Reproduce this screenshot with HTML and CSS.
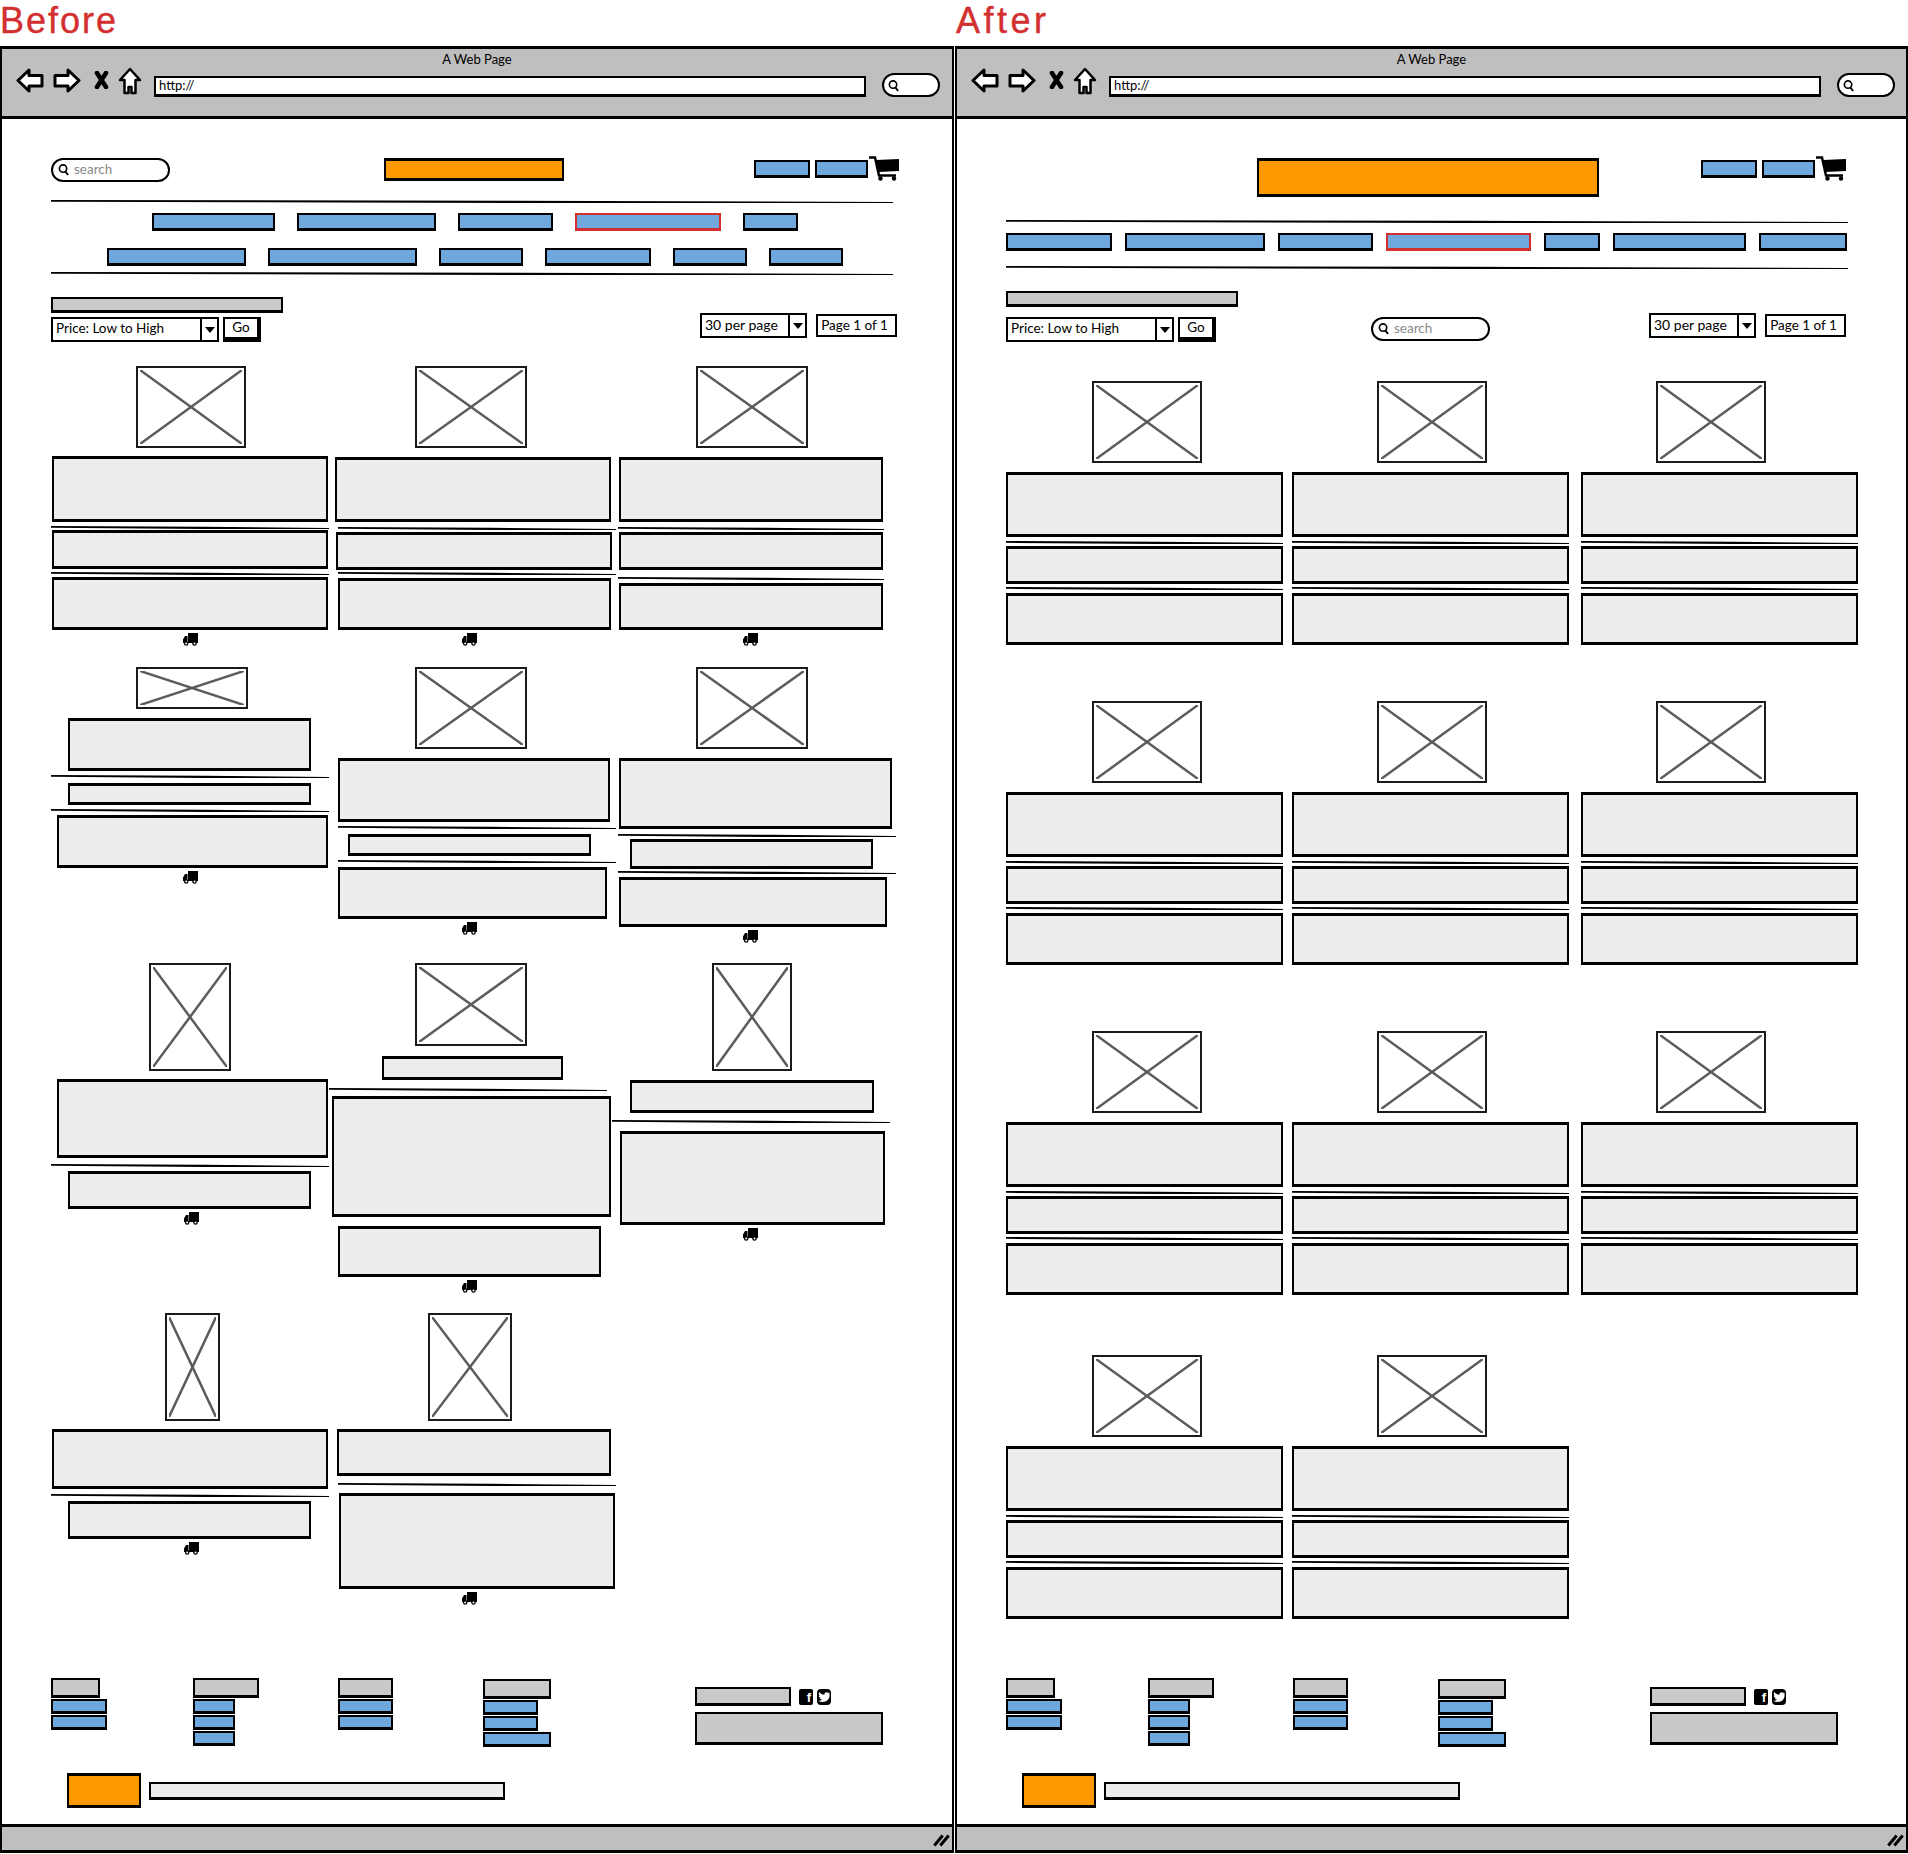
FILE: index.html
```html
<!DOCTYPE html>
<html lang="en">
<head>
    <meta charset="UTF-8">
    <meta name="viewport" content="width=device-width, initial-scale=1.0">
    <title>Before and After</title>
    <link rel="stylesheet" href="styles.css">
</head>
<body>
    <svg class="sprites" width="0" height="0" aria-hidden="true">
        <symbol id="i-back" viewBox="0 0 28 25"><path d="M2 12.5 L13 2 V7.500 H26 V18 H13 V23 Z" fill="#fff" stroke="#000" stroke-width="3" stroke-linejoin="round"/></symbol>
        <symbol id="i-forward" viewBox="0 0 28 25"><path d="M26 12.500 L15 2 V7.500 H2 V18 H15 V23 Z" fill="#fff" stroke="#000" stroke-width="3" stroke-linejoin="round"/></symbol>
        <symbol id="i-stop" viewBox="0 0 15 18"><path d="M3 2 L12 16 M12 2 L3 16" fill="none" stroke="#000" stroke-width="4.500" stroke-linecap="round"/></symbol>
        <symbol id="i-home" viewBox="0 0 24 28"><path d="M12 2 L22 13 H17.500 V26 H13.500 V20 H10.500 V26 H6.500 V13 H2 Z" fill="#fff" stroke="#000" stroke-width="2.500" stroke-linejoin="round"/></symbol>
        <symbol id="i-find" viewBox="0 0 12 14"><circle cx="5.500" cy="6" r="4" fill="none" stroke="#000" stroke-width="1.800"/><path d="M8 9 L11 13" stroke="#000" stroke-width="2"/></symbol>
        <symbol id="i-cart" viewBox="0 0 30 25"><path d="M0 1.500 H6 L10 19.500 H27" fill="none" stroke="#000" stroke-width="2.500"/><path d="M7 4 L30 3 V15 L9.500 16 Z" fill="#000"/><circle cx="11.500" cy="22.500" r="2.200" fill="#000"/><circle cx="25" cy="22.500" r="2.200" fill="#000"/></symbol>
        <symbol id="i-truck" viewBox="0 0 15 13"><path d="M5 0 H15 V10 H5 Z M4.500 3 V10 H0 V6.500 L2 3 Z" fill="#000"/><circle cx="3.200" cy="10.500" r="2.300" fill="#000"/><circle cx="3.200" cy="10.500" r="1" fill="#fff"/><circle cx="11.500" cy="10.500" r="2.300" fill="#000"/><circle cx="11.500" cy="10.500" r="1" fill="#fff"/></symbol>
        <symbol id="i-bird" viewBox="0 0 14 14"><path d="M13 3.200 C12.500 3.500 12 3.600 11.500 3.700 C12 3.300 12.400 2.800 12.600 2.200 C12.100 2.500 11.500 2.700 11 2.800 C9.800 1.500 7.400 2.400 7.400 4.200 C7.400 4.400 7.400 4.600 7.500 4.800 C5.300 4.700 3.400 3.700 2.100 2.100 C1.400 3.300 1.800 4.800 2.900 5.500 C2.500 5.500 2.100 5.400 1.700 5.200 C1.700 6.500 2.600 7.500 3.800 7.800 C3.400 7.900 3 7.900 2.600 7.800 C3 8.900 4 9.600 5.100 9.700 C4 10.500 2.600 10.900 1.200 10.700 C6.600 14 13.500 10.500 12.500 4.200 C12.900 3.900 12.700 3.600 13 3.200 Z" fill="#fff"/></symbol>
    </svg>

    <div class="labels">
        <h1 class="label label-before">Before</h1>
        <h1 class="label label-after">After</h1>
    </div>

    <div class="windows">
        <!-- old layout -->
        <section class="window window-before">
            <header class="chrome">
                <div class="chrome-title">A Web Page</div>
                <div class="chrome-bar">
                    <svg class="ico ico-back"><use href="#i-back"/></svg>
                    <svg class="ico ico-forward"><use href="#i-forward"/></svg>
                    <svg class="ico ico-stop"><use href="#i-stop"/></svg>
                    <svg class="ico ico-home"><use href="#i-home"/></svg>
                    <div class="url">http://</div>
                    <div class="chrome-search"><svg class="find"><use href="#i-find"/></svg></div>
                </div>
            </header>

            <main class="canvas">
                <div class="top">
                    <div class="search"><svg class="find"><use href="#i-find"/></svg>search</div>
                    <div class="logo"></div>
                    <div class="account">
                        <div class="bar bar-a"></div>
                        <div class="bar bar-b"></div>
                        <svg class="cart"><use href="#i-cart"/></svg>
                    </div>
                </div>
                <div class="rule rule-wide"></div>
                <nav class="nav" id="nav-before"></nav>
                <div class="rule rule-wide"></div>

                <div class="heading-bar"></div>
                <div class="toolbar">
                    <div class="select select-sort">
                        <span class="select-text">Price: Low to High</span>
                        <span class="select-arrow"></span>
                    </div>
                    <div class="go">Go</div>
                    <div class="pager">
                        <div class="select select-count">
                            <span class="select-text">30 per page</span>
                            <span class="select-arrow"></span>
                        </div>
                        <div class="page-no">Page 1 of 1</div>
                    </div>
                </div>

                <div class="grid" id="grid-before"></div>

                <footer class="foot">
                    <div class="foot-col"><div class="foot-head"></div><div class="bar foot-link"></div><div class="bar foot-link"></div></div>
                    <div class="foot-col"><div class="foot-head"></div><div class="bar foot-link"></div><div class="bar foot-link"></div><div class="bar foot-link"></div></div>
                    <div class="foot-col"><div class="foot-head"></div><div class="bar foot-link"></div><div class="bar foot-link"></div></div>
                    <div class="foot-col"><div class="foot-head"></div><div class="bar foot-link"></div><div class="bar foot-link"></div><div class="bar foot-link"></div></div>
                    <div class="social">
                        <div class="social-row">
                            <div class="social-title"></div>
                            <span class="badge">f</span>
                            <svg class="badge badge-tw"><use href="#i-bird"/></svg>
                        </div>
                        <div class="signup"></div>
                    </div>
                </footer>
                <div class="legal">
                    <div class="legal-logo"></div>
                    <div class="legal-text"></div>
                </div>
            </main>

            <div class="status"><span class="grip"></span></div>
        </section>

        <!-- new layout -->
        <section class="window window-after">
            <header class="chrome">
                <div class="chrome-title">A Web Page</div>
                <div class="chrome-bar">
                    <svg class="ico ico-back"><use href="#i-back"/></svg>
                    <svg class="ico ico-forward"><use href="#i-forward"/></svg>
                    <svg class="ico ico-stop"><use href="#i-stop"/></svg>
                    <svg class="ico ico-home"><use href="#i-home"/></svg>
                    <div class="url">http://</div>
                    <div class="chrome-search"><svg class="find"><use href="#i-find"/></svg></div>
                </div>
            </header>

            <main class="canvas">
                <div class="top">
                    <div class="logo"></div>
                    <div class="account">
                        <div class="bar bar-a"></div>
                        <div class="bar bar-b"></div>
                        <svg class="cart"><use href="#i-cart"/></svg>
                    </div>
                </div>
                <div class="rule rule-wide"></div>
                <nav class="nav" id="nav-after"></nav>
                <div class="rule rule-wide"></div>

                <div class="heading-bar"></div>
                <div class="toolbar">
                    <div class="select select-sort">
                        <span class="select-text">Price: Low to High</span>
                        <span class="select-arrow"></span>
                    </div>
                    <div class="go">Go</div>
                    <div class="search"><svg class="find"><use href="#i-find"/></svg>search</div>
                    <div class="pager">
                        <div class="select select-count">
                            <span class="select-text">30 per page</span>
                            <span class="select-arrow"></span>
                        </div>
                        <div class="page-no">Page 1 of 1</div>
                    </div>
                </div>

                <div class="grid" id="grid-after"></div>

                <footer class="foot">
                    <div class="foot-col"><div class="foot-head"></div><div class="bar foot-link"></div><div class="bar foot-link"></div></div>
                    <div class="foot-col"><div class="foot-head"></div><div class="bar foot-link"></div><div class="bar foot-link"></div><div class="bar foot-link"></div></div>
                    <div class="foot-col"><div class="foot-head"></div><div class="bar foot-link"></div><div class="bar foot-link"></div></div>
                    <div class="foot-col"><div class="foot-head"></div><div class="bar foot-link"></div><div class="bar foot-link"></div><div class="bar foot-link"></div></div>
                    <div class="social">
                        <div class="social-row">
                            <div class="social-title"></div>
                            <span class="badge">f</span>
                            <svg class="badge badge-tw"><use href="#i-bird"/></svg>
                        </div>
                        <div class="signup"></div>
                    </div>
                </footer>
                <div class="legal">
                    <div class="legal-logo"></div>
                    <div class="legal-text"></div>
                </div>
            </main>

            <div class="status"><span class="grip"></span></div>
        </section>
    </div>

    <script src="app.js"></script>
</body>
</html>
```

FILE: styles.css
```css
* {
    box-sizing: border-box;
}

body {
    margin: 0;
    background: #fff;
    color: #000;
    font-family: Lato, "Open Sans", sans-serif;
}

.sprites {
    position: absolute;
}

/* Before / After captions */
.labels {
    display: flex;
    height: 46px;
}

.label {
    margin: 0;
    font-family: "Liberation Sans", Arial, sans-serif;
    font-size: 36px;
    font-weight: 400;
    line-height: 41px;
    color: #d32f2f;
    -webkit-text-stroke: 0.400px #d32f2f;
}

.label-before {
    width: 956px;
    letter-spacing: 2px;
}

.label-after {
    letter-spacing: 3.500px;
}

.windows {
    display: flex;
    gap: 1px;
}

.window {
    display: flex;
    flex-direction: column;
    height: 1807px;
    border: 2px solid #000;
    border-top-width: 3px;
    border-bottom-width: 3px;
}

.window-before {
    width: 954px;
}

.window-after {
    width: 953px;
}

/* browser chrome */
.chrome {
    height: 70px;
    padding-top: 2px;
    background: #bfbfbf;
    border-bottom: 3px solid #000;
}

.chrome-title {
    height: 16px;
    font-size: 13px;
    line-height: 16px;
    text-align: center;
}

.chrome-bar {
    display: flex;
    align-items: flex-start;
    padding-left: 14px;
}

.ico-back {
    width: 28px;
    height: 25px;
    margin-top: 1px;
}

.ico-forward {
    width: 28px;
    height: 25px;
    margin: 1px 0 0 9px;
}

.ico-stop {
    width: 15px;
    height: 18px;
    margin: 4px 0 0 13px;
}

.ico-home {
    width: 24px;
    height: 28px;
    margin: 0 0 0 9px;
}

.url {
    width: 712px;
    height: 21px;
    margin: 9px 0 0 12px;
    padding-left: 3px;
    background: #fff;
    border: 2px solid #000;
    border-bottom-width: 3px;
    font-size: 13px;
    line-height: 14px;
}

.chrome-search {
    display: flex;
    align-items: center;
    width: 58px;
    height: 24px;
    margin: 6px 0 0 16px;
    padding-left: 4px;
    background: #fff;
    border: 2px solid #000;
    border-radius: 12px;
}

.find {
    flex: none;
    width: 11px;
    height: 13px;
}

/* page content */
.canvas {
    flex: 1;
    background: #fff;
}

.window-before .canvas {
    padding: 37px 53px 0 49px;
}

.window-after .canvas {
    padding: 37px 60px 0 49px;
}

.top {
    display: flex;
    align-items: flex-start;
}

.window-before .top {
    height: 25px;
    margin-bottom: 19px;
}

.window-after .top {
    height: 41px;
    margin-bottom: 23px;
}

.search {
    display: flex;
    align-items: center;
    gap: 5px;
    width: 119px;
    height: 24px;
    padding: 0 0 2px 5px;
    background: #fff;
    border: 2px solid #000;
    border-radius: 12px;
    font-size: 13.500px;
    color: #8a8a8a;
}

.window-before .top .search {
    margin-top: 2px;
}

.logo {
    margin-top: 2px;
    background: #f90;
    border: 2px solid #000;
    border-top-width: 3px;
    border-bottom-width: 3px;
}

.window-before .logo {
    width: 180px;
    height: 23px;
    margin-left: 214px;
}

.window-after .logo {
    width: 342px;
    height: 39px;
    margin-left: 251px;
}

.account {
    display: flex;
    align-items: flex-start;
    margin-left: auto;
}

.bar {
    flex: none;
    background: #6fa8dc;
    border: 2px solid #000;
    border-bottom-width: 3px;
}

.bar-a {
    width: 56px;
    height: 18px;
    margin-top: 4px;
}

.bar-b {
    width: 53px;
    height: 18px;
    margin: 4px 0 0 5px;
}

.cart {
    width: 30px;
    height: 25px;
    margin-left: 1px;
}

.rule {
    flex: none;
    height: 3px;
    background: #000;
    clip-path: polygon(0 0, 55% 25%, 100% 65%, 100% 100%, 55% 100%, 0 60%);
}

.rule-wide {
    width: 842px;
}

/* nav rows */
.window-before .nav {
    padding: 10px 0 6px;
}

.window-after .nav {
    padding: 10px 0 15px;
}

.nav-row {
    display: flex;
    height: 18px;
}

.window-before .nav-row {
    justify-content: center;
    gap: 22px;
    margin-bottom: 17px;
}

.window-before .nav-row:last-child {
    margin-bottom: 0;
}

.window-after .nav-row {
    justify-content: space-between;
    width: 841px;
}

.bar-active {
    border-color: #d32f2f;
}

/* sort and paging */
.heading-bar {
    width: 232px;
    height: 16px;
    background: #c9c9c9;
    border: 2px solid #000;
    border-bottom-width: 3px;
}

.window-before .heading-bar {
    margin-top: 22px;
}

.window-after .heading-bar {
    margin-top: 22px;
}

.toolbar {
    display: flex;
    align-items: flex-start;
    font-size: 13.500px;
}

.window-before .toolbar {
    margin-top: 4px;
}

.window-after .toolbar {
    margin-top: 10px;
}

.select {
    display: flex;
    height: 25px;
    background: #fff;
    border: 2px solid #000;
}

.select-sort {
    width: 168px;
}

.select-count {
    width: 107px;
    font-size: 14px;
}

.select-text {
    flex: 1;
    padding-left: 3px;
    line-height: 19px;
}

.select-arrow {
    position: relative;
    flex: none;
    width: 17px;
    border-left: 2px solid #000;
}

.select-arrow::after {
    content: "";
    position: absolute;
    top: 8px;
    left: 3px;
    border: 5px solid transparent;
    border-top: 6px solid #000;
    border-bottom: 0;
}

.go {
    width: 38px;
    height: 25px;
    margin-left: 4px;
    background: #fff;
    border: 2px solid #000;
    border-right-width: 4px;
    border-bottom-width: 5px;
    text-align: center;
    line-height: 17px;
}

.toolbar > .search {
    margin-left: 155px;
}

.pager {
    display: flex;
    align-items: center;
    gap: 9px;
    margin: -4px 0 0 auto;
}

.window-before .pager {
    margin-right: 2px;
}

.page-no {
    width: 81px;
    height: 23px;
    padding-right: 4px;
    background: #fff;
    border: 2px solid #000;
    text-align: center;
    line-height: 19px;
}

/* product grid */
.grid {
    display: grid;
}

.window-before .grid {
    grid-template-columns: 284px 284px 277px;
    grid-template-rows: 301px 296px 350px 365px;
    margin-top: 24px;
}

.window-after .grid {
    grid-template-columns: 286px 289px 276px;
    grid-template-rows: 320px 330px 324px 323px;
    margin-top: 39px;
}

.card {
    display: flex;
    flex-direction: column;
    align-items: flex-start;
}

.card > * {
    flex: none;
}

.ph {
    display: block;
    background: #fff;
    border: 2px solid #1a1a1a;
    padding: 2px;
}

.ph svg {
    display: block;
    width: 100%;
    height: 100%;
}

.ph line {
    stroke: #5c5c5c;
    stroke-width: 2.500;
    vector-effect: non-scaling-stroke;
}

.block {
    background: #ededed;
    border: 2px solid #000;
    border-top-width: 3px;
    border-bottom-width: 3px;
}

.truck {
    width: 15px;
    height: 13px;
}

/* footer */
.foot {
    display: grid;
    grid-template-columns: 142px 145px 145px 212px auto;
    height: 68px;
}

.foot-col {
    display: flex;
    flex-direction: column;
    gap: 1px;
}

.foot-head {
    height: 20px;
    background: #c9c9c9;
    border: 2px solid #000;
    border-bottom-width: 3px;
}

.foot-link {
    height: 15px;
}

.foot-col:nth-child(1) .foot-head {
    width: 49px;
}

.foot-col:nth-child(1) .foot-link {
    width: 56px;
}

.foot-col:nth-child(2) .foot-head {
    width: 66px;
}

.foot-col:nth-child(2) .foot-link {
    width: 42px;
}

.foot-col:nth-child(3) .foot-head,
.foot-col:nth-child(3) .foot-link {
    width: 55px;
}

.foot-col:nth-child(4) {
    padding-top: 1px;
}

.foot-col:nth-child(4) .foot-link {
    width: 55px;
}

.foot-col:nth-child(4) .foot-head,
.foot-col:nth-child(4) .foot-link:last-child {
    width: 68px;
}

.social {
    padding-top: 9px;
}

.social-row {
    display: flex;
    align-items: center;
    height: 19px;
    margin-bottom: 6px;
}

.social-title {
    width: 96px;
    height: 19px;
    margin-right: 8px;
    background: #c9c9c9;
    border: 2px solid #000;
    border-bottom-width: 3px;
}

.badge {
    display: block;
    width: 14px;
    height: 16px;
    margin-right: 4px;
    background: #000;
    border-radius: 2px;
    color: #fff;
    font-family: "Liberation Sans", sans-serif;
    font-size: 13px;
    font-weight: 700;
    line-height: 17px;
    text-align: right;
    padding-right: 2px;
}

.badge-tw {
    padding: 0;
    border-radius: 4px;
}

.signup {
    width: 188px;
    height: 33px;
    background: #c9c9c9;
    border: 2px solid #000;
    border-bottom-width: 3px;
}

.legal {
    display: flex;
    align-items: center;
    gap: 8px;
    margin: 27px 0 0 16px;
}

.legal-logo {
    width: 74px;
    height: 35px;
    background: #f90;
    border: 2px solid #000;
    border-top-width: 3px;
    border-bottom-width: 3px;
}

.legal-text {
    width: 356px;
    height: 18px;
    background: #ededed;
    border: 2px solid #000;
    border-bottom-width: 3px;
}

/* status bar */
.status {
    display: flex;
    justify-content: flex-end;
    flex: none;
    height: 26px;
    padding: 7px 3px 0 0;
    background: #bfbfbf;
    border-top: 3px solid #000;
}

.grip {
    position: relative;
    width: 15px;
    height: 12px;
}

.grip::before,
.grip::after {
    content: "";
    position: absolute;
    top: 0;
    width: 3px;
    height: 13px;
    background: #000;
    transform: rotate(40deg);
}

.grip::before {
    left: 3px;
}

.grip::after {
    left: 9px;
}
```

FILE: app.js
```js
// nav bar widths, one list per row
const beforeNav = [
    [123, 139, 95, { w: 146, active: true }, 55],
    [139, 149, 84, 106, 74, 74]
];
const afterNav = [
    [106, 140, 95, { w: 145, active: true }, 56, 133, 88]
];

// column left edges, page coordinates
const beforeCols = [51, 335, 619];
const afterCols = [1006, 1292, 1581];

// [type, x, y, w, h] in page coordinates, in reading order
const beforeCards = [
    { col: 0, top: 366, items: [['ph', 136, 366, 110, 82], ['block', 52, 456, 276, 66], ['rule', 51, 526, 278], ['block', 52, 530, 276, 39], ['rule', 51, 572, 278], ['block', 52, 577, 276, 53], ['truck', 183, 633]] },
    { col: 1, top: 366, items: [['ph', 415, 366, 112, 82], ['block', 335, 457, 276, 65], ['rule', 338, 527, 278], ['block', 336, 532, 276, 38], ['rule', 338, 572, 278], ['block', 338, 578, 273, 52], ['truck', 462, 633]] },
    { col: 2, top: 366, items: [['ph', 696, 366, 112, 82], ['block', 619, 457, 264, 65], ['rule', 618, 527, 266], ['block', 619, 532, 264, 38], ['rule', 618, 577, 266], ['block', 619, 583, 264, 47], ['truck', 743, 633]] },

    { col: 0, top: 667, items: [['ph', 136, 667, 112, 42], ['block', 68, 718, 243, 53], ['rule', 51, 775, 278], ['block', 68, 783, 243, 22], ['rule', 51, 809, 278], ['block', 57, 815, 271, 53], ['truck', 183, 871]] },
    { col: 1, top: 667, items: [['ph', 415, 667, 112, 82], ['block', 338, 758, 272, 64], ['rule', 338, 826, 278], ['block', 348, 834, 243, 22], ['rule', 338, 860, 278], ['block', 338, 867, 269, 52], ['truck', 462, 922]] },
    { col: 2, top: 667, items: [['ph', 696, 667, 112, 82], ['block', 619, 758, 273, 71], ['rule', 618, 834, 278], ['block', 630, 839, 243, 30], ['rule', 618, 871, 278], ['block', 619, 877, 268, 50], ['truck', 743, 930]] },

    { col: 0, top: 963, items: [['ph', 149, 963, 82, 108], ['block', 57, 1079, 271, 79], ['rule', 51, 1164, 278], ['block', 68, 1171, 243, 38], ['truck', 184, 1212]] },
    { col: 1, top: 963, items: [['ph', 415, 963, 112, 83], ['block', 382, 1056, 181, 24], ['rule', 329, 1088, 278], ['block', 332, 1096, 279, 121], ['block', 338, 1226, 263, 51], ['truck', 462, 1280]] },
    { col: 2, top: 963, items: [['ph', 712, 963, 80, 108], ['block', 630, 1080, 244, 33], ['rule', 612, 1120, 278], ['block', 620, 1131, 265, 94], ['truck', 743, 1228]] },

    { col: 0, top: 1313, items: [['ph', 165, 1313, 55, 108], ['block', 52, 1429, 276, 60], ['rule', 51, 1494, 278], ['block', 68, 1501, 243, 38], ['truck', 184, 1542]] },
    { col: 1, top: 1313, items: [['ph', 428, 1313, 84, 108], ['block', 337, 1429, 274, 47], ['rule', 338, 1483, 278], ['block', 339, 1493, 276, 96], ['truck', 462, 1592]] }
];

// the new layout repeats one card
function afterCard(col, imgX, top) {
    let x = afterCols[col];
    return {
        col: col,
        top: top,
        items: [
            ['ph', imgX, top, 110, 82],
            ['block', x, top + 91, 277, 65],
            ['rule', x, top + 160, 277],
            ['block', x, top + 165, 277, 38],
            ['rule', x, top + 206, 277],
            ['block', x, top + 212, 277, 52]
        ]
    };
}

const afterCards = [];
[381, 701, 1031, 1355].forEach((top, row) => {
    [1092, 1377, 1656].forEach((imgX, col) => {
        if (row < 3 || col < 2) {
            afterCards.push(afterCard(col, imgX, top));
        }
    });
});

function renderNav(id, rows) {
    let nav = document.getElementById(id);
    rows.forEach(row => {
        let rowDiv = document.createElement('div');
        rowDiv.className = 'nav-row';
        row.forEach(entry => {
            let item = document.createElement('div');
            item.className = entry.active ? 'bar bar-active' : 'bar';
            item.style.width = (entry.w || entry) + 'px';
            rowDiv.appendChild(item);
        });
        nav.appendChild(rowDiv);
    });
}

function makeItem(type, w, h) {
    if (type === 'truck') {
        let svg = document.createElementNS('http://www.w3.org/2000/svg', 'svg');
        svg.setAttribute('class', 'truck');
        svg.innerHTML = '<use href="#i-truck"/>';
        return svg;
    }
    let el = document.createElement('div');
    el.className = type;
    el.style.width = w + 'px';
    if (h) {
        el.style.height = h + 'px';
    }
    if (type === 'ph') {
        el.innerHTML = '<svg viewBox="0 0 100 100" preserveAspectRatio="none">' +
            '<line x1="0" y1="0" x2="100" y2="100"/><line x1="100" y1="0" x2="0" y2="100"/></svg>';
    }
    return el;
}

function renderGrid(id, cols, cards) {
    let grid = document.getElementById(id);
    cards.forEach(card => {
        let cardDiv = document.createElement('div');
        cardDiv.className = 'card';
        let cursor = card.top;
        card.items.forEach(spec => {
            let type = spec[0];
            let h = type === 'rule' ? 3 : type === 'truck' ? 13 : spec[4];
            let el = makeItem(type, spec[3], type === 'rule' ? 0 : spec[4]);
            el.style.marginLeft = (spec[1] - cols[card.col]) + 'px';
            el.style.marginTop = (spec[2] - cursor) + 'px';
            cursor = spec[2] + h;
            cardDiv.appendChild(el);
        });
        grid.appendChild(cardDiv);
    });
}

renderNav('nav-before', beforeNav);
renderNav('nav-after', afterNav);
renderGrid('grid-before', beforeCols, beforeCards);
renderGrid('grid-after', afterCols, afterCards);
```
